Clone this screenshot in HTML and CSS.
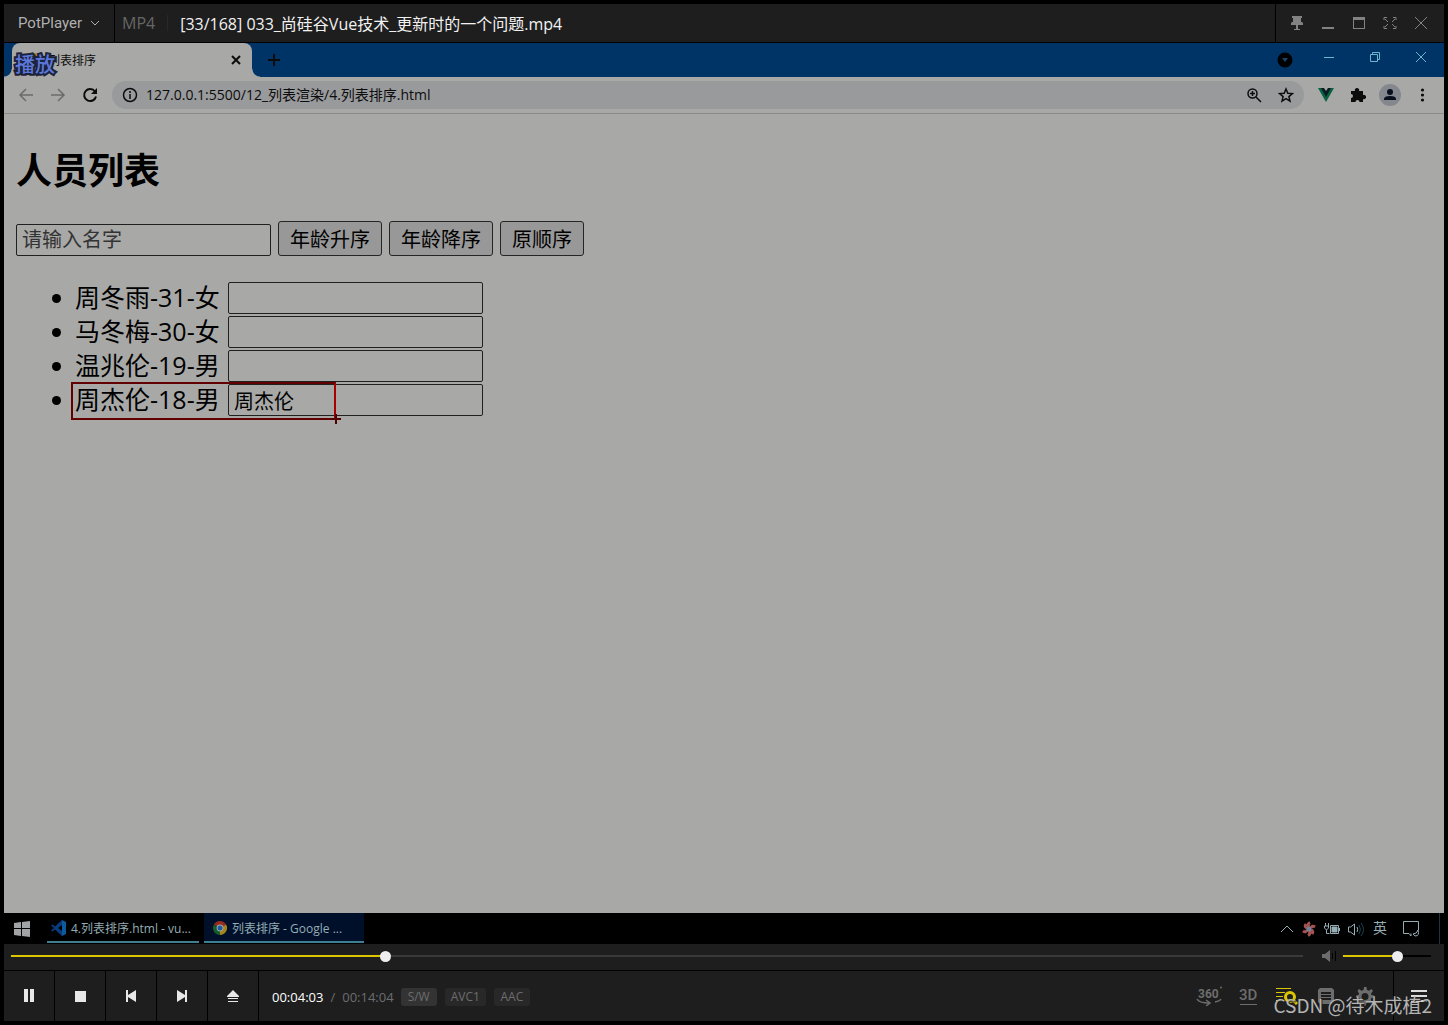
FILE: index.html
```html
<!DOCTYPE html>
<html lang="zh-CN">
<head>
<meta charset="utf-8">
<title>PotPlayer</title>
<link rel="stylesheet" href="styles.css">
</head>
<body>
<div class="player">
  <header class="titlebar">
    <button class="brand">PotPlayer
      <svg width="10" height="6" viewBox="0 0 10 6" class="line"><path d="M1 1l4 4 4-4"/></svg>
    </button>
    <span class="format">MP4</span>
    <h1 class="file-name">[33/168] 033_尚硅谷Vue技术_更新时的一个问题.mp4</h1>
    <div class="window-buttons">
      <button aria-label="置顶"><svg width="14" height="16" viewBox="0 0 14 16"><path fill="currentColor" d="M2 1h10v2h-1v4h1l1 1v2H8v4h2v1H4v-1h2v-4H1V8l1-1h1V3H2z"/></svg></button>
      <button aria-label="最小化"><svg width="14" height="16" viewBox="0 0 14 16"><path fill="currentColor" d="M1 12h12v2H1z"/></svg></button>
      <button aria-label="最大化"><svg width="14" height="16" viewBox="0 0 14 16"><path fill="currentColor" fill-rule="evenodd" d="M1 2h12v12H1zM2 5v8h10V5z"/></svg></button>
      <button aria-label="全屏"><svg width="14" height="16" viewBox="0 0 14 16" class="line"><path d="M1 5V2.500h3M10 2.500h3V5M13 11v2.500h-3M4 13.500H1V11M2 4l3 3M12 4L9 7M2 12l3-3M12 12L9 9"/></svg></button>
      <button aria-label="关闭"><svg width="14" height="16" viewBox="0 0 14 16" class="line"><path d="M1 2l12 12M13 2L1 14"/></svg></button>
    </div>
  </header>

  <main class="video">
    <div class="tab-strip">
      <div class="tab">
        <svg width="16" height="16" viewBox="0 0 16 16"><path fill="#a56a06" d="M3 5l2-4 3 1 3-1 3 4-2 4H5z"/><path fill="#241b08" d="M5 5h7l-1 7H6z"/></svg>
        <span class="tab-title">列表排序</span>
        <button aria-label="关闭标签页"><svg width="12" height="12" viewBox="0 0 12 12" class="bold"><path d="M2 2l8 8M10 2l-8 8"/></svg></button>
      </div>
      <button class="new-tab" aria-label="新标签页"><svg width="14" height="14" viewBox="0 0 14 14" class="bold"><path d="M7 1v12M1 7h12"/></svg></button>
      <button class="tab-search" aria-label="搜索标签页"><svg width="16" height="16" viewBox="0 0 16 16"><circle cx="8" cy="8" r="7.500"/><path fill="#17456b" d="M5 6h6l-3 4z"/></svg></button>
      <div class="browser-buttons">
        <button aria-label="最小化"><svg width="12" height="12" viewBox="0 0 12 12" class="line"><path d="M1 6.500h10"/></svg></button>
        <button aria-label="还原"><svg width="12" height="12" viewBox="0 0 12 12" class="line"><path d="M1.500 3.500h7v7h-7zM3.500 3V1.500h7v7H9"/></svg></button>
        <button aria-label="关闭"><svg width="12" height="12" viewBox="0 0 12 12" class="line"><path d="M1 1l10 10M11 1L1 11"/></svg></button>
      </div>
      <span class="osd">播放</span>
    </div>

    <div class="toolbar">
      <button class="dim" aria-label="后退"><svg width="16" height="16" viewBox="0 0 16 16" class="mid"><path d="M15 8H2M8 2L2 8l6 6"/></svg></button>
      <button class="dim" aria-label="前进"><svg width="16" height="16" viewBox="0 0 16 16" class="mid"><path d="M1 8h13M8 2l6 6-6 6"/></svg></button>
      <button aria-label="刷新"><svg width="16" height="16" viewBox="0 0 16 16" class="bold"><path d="M13 4.500A6 6 0 1 0 14 9.500"/><path fill="currentColor" stroke="none" d="M15 1v6H9z"/></svg></button>
      <div class="omnibox">
        <svg width="16" height="16" viewBox="0 0 16 16" class="mid"><circle cx="8" cy="8" r="6.500"/><path d="M8 7v5M8 4v2"/></svg>
        <input class="url" aria-label="地址" value="127.0.0.1:5500/12_列表渲染/4.列表排序.html">
        <button aria-label="缩放"><svg width="16" height="16" viewBox="0 0 16 16" class="mid"><circle cx="6.500" cy="6.500" r="4.500"/><path d="M10 10l5 5M4 6.500h5M6.500 4v5"/></svg></button>
        <button aria-label="收藏"><svg width="16" height="16" viewBox="0 0 16 16" class="mid"><path d="M8 2l1.800 4.200 4.600.4-3.500 3 1.100 4.500L8 11.700l-4 2.400 1.100-4.500-3.500-3 4.600-.4z"/></svg></button>
      </div>
      <button aria-label="Vue"><svg width="16" height="16" viewBox="0 0 16 16"><path fill="#08633f" d="M0 1h4l4 7 4-7h4L8 15z"/><path fill="#0d1c24" d="M3 1h3l2 3 2-3h3L8 10z"/></svg></button>
      <button aria-label="扩展程序"><svg width="16" height="16" viewBox="0 0 16 16"><path fill="currentColor" d="M1 4h4a2.200 2.200 0 1 1 4 0h4v4a2.200 2.200 0 1 1 0 4v3H9.500a2 2 0 1 0-4 0H1v-4a2 2 0 1 0 0-4z"/></svg></button>
      <button aria-label="用户"><svg width="22" height="22" viewBox="0 0 22 22"><circle cx="11" cy="11" r="11" fill="#84878d"/><circle cx="11" cy="8" r="3" fill="#0a0f1e"/><path fill="#0a0f1e" d="M5 16v-1q0-3 6-3t6 3v1z"/></svg></button>
      <button aria-label="菜单"><svg width="16" height="16" viewBox="0 0 16 16"><g fill="currentColor"><circle cx="8.500" cy="3" r="1.600"/><circle cx="8.500" cy="8" r="1.600"/><circle cx="8.500" cy="13" r="1.600"/></g></svg></button>
    </div>

    <section class="page">
      <h2>人员列表</h2>
      <div class="filters">
        <input type="text" placeholder="请输入名字" aria-label="请输入名字">
        <button>年龄升序</button>
        <button>年龄降序</button>
        <button>原顺序</button>
      </div>
      <ul class="people">
        <li><label for="p1">周冬雨-31-女</label><input id="p1" type="text"></li>
        <li><label for="p2">马冬梅-30-女</label><input id="p2" type="text"></li>
        <li><label for="p3">温兆伦-19-男</label><input id="p3" type="text"></li>
        <li><label for="p4">周杰伦-18-男</label><input id="p4" type="text" value="周杰伦"><span class="marker"></span></li>
      </ul>
    </section>

    <div class="taskbar">
      <button class="start" aria-label="开始"><svg width="16" height="16" viewBox="0 0 16 16"><path fill="#a0a4a7" d="M0 2l7-1v6H0zM8 1l8-1v7H8zM0 8h7v7l-7-1zM8 8h8v8l-8-1z"/></svg></button>
      <button class="task task-code">
        <svg width="16" height="16" viewBox="0 0 16 16"><path fill="#093c7d" d="M11 0L4 6.500 1.500 4.500 0 5.500 3 8l-3 2.500 1.500 1L4 9.500 11 16zM11 5v6L7 8z"/><path fill="#0d59a0" d="M11 0l4 2v12l-4 2z"/></svg>
        <span>4.列表排序.html - vu...</span>
      </button>
      <button class="task task-browser">
        <svg width="16" height="16" viewBox="0 0 16 16"><path fill="#982b20" d="M8 8L1.900 4.500a7 7 0 0 1 12.200 0z"/><path fill="#a5841a" d="M8 8l6.100-3.500A7 7 0 0 1 8 15z"/><path fill="#155b2b" d="M8 8v7A7 7 0 0 1 1.900 4.500z"/><circle cx="8" cy="8" r="3.400" fill="#a5a9aa"/><circle cx="8" cy="8" r="2.500" fill="#205aa5"/></svg>
        <span>列表排序 - Google ...</span>
      </button>
      <div class="tray">
        <svg width="14" height="16" viewBox="0 0 14 16" class="line"><path d="M1 11l6-6 6 6"/></svg>
        <svg width="14" height="16" viewBox="0 0 14 16"><g fill="none" stroke="#a5544f" stroke-width="3"><path d="M7 6q-2-3 1-4.500M9 7q1-3 4-1M9 9q3 1 1 4M7 10q2 3-1 4.500M5 9q-1 3-4 1M5 7Q2 6 4 3"/></g><circle cx="7" cy="8" r="2.600" fill="#76809a"/></svg>
        <svg width="16" height="16" viewBox="1 0 16 16" class="line"><path d="M2.500 2v3M5.500 2v3M1.500 5v2l2 2 2-2V5zM3.500 9v3.500h3"/><path d="M7.500 4.500h8v8h-8zM16.500 7v3"/><path fill="currentColor" d="M9 6h5v5H9z"/></svg>
        <svg width="16" height="16" viewBox="1 0 16 16" class="line"><path d="M1.500 6v5h2l4 3V3l-4 3zM10 6q1.500 2.500 0 5"/><path stroke="#164450" d="M12 4q3 4.500 0 9M14 2q5 6.500 0 13"/></svg>
        <span class="ime">英</span>
        <svg width="18" height="18" viewBox="0 0 18 18" class="line"><path d="M7 13.500H1.500v-12h15V10M7 13.500l2 2.500v-2.500M11 14q4 0 5-4 2 6-3 6z"/></svg>
        <span class="show-desktop"></span>
      </div>
    </div>
  </main>

  <div class="seek-row">
    <input class="seek" type="range" min="0" max="844" value="243" aria-label="播放进度">
    <svg width="16" height="14" viewBox="0 0 16 14"><path fill="#6d6d6d" d="M1 5h3l5-4v12L4 9H1z"/><path class="line" stroke="#6d6d6d" d="M11.500 4v6M14.500 2v10"/></svg>
    <input class="volume" type="range" min="0" max="100" value="63" aria-label="音量">
  </div>

  <footer class="controls">
    <button aria-label="暂停"><svg width="16" height="16" viewBox="0 0 16 16"><path fill="currentColor" d="M3 1h4v13H3zM9 1h4v13H9z"/></svg></button>
    <button aria-label="停止"><svg width="16" height="16" viewBox="0 0 16 16"><path fill="currentColor" d="M3 3h11v11H3z"/></svg></button>
    <button aria-label="上一个"><svg width="16" height="16" viewBox="0 0 16 16"><path fill="currentColor" d="M3 2h2v5l8-5v12L5 9v5H3z"/></svg></button>
    <button aria-label="下一个"><svg width="16" height="16" viewBox="0 0 16 16"><path fill="currentColor" d="M13 2h-2v5L3 2v12l8-5v5h2z"/></svg></button>
    <button aria-label="打开"><svg width="16" height="16" viewBox="0 0 16 16"><path fill="currentColor" d="M8 2l6 6v1H2V8zM3 10h10v1H3zM3 13h10v1H3z"/></svg></button>
    <div class="time"><span class="now">00:04:03</span><span>/</span><span>00:14:04</span></div>
    <div class="badges"><span class="on">S/W</span><span>AVC1</span><span>AAC</span></div>
    <div class="extras">
      <button aria-label="360 度"><svg width="26" height="20" viewBox="0 0 26 20"><text x="2" y="12" class="glyph">360</text><circle cx="25" cy="1.500" r="1" fill="currentColor"/><path class="arc" d="M1 13q2 4 12 4M25 13q-1 2-6 3M10 14l4 3-4 3"/></svg></button>
      <button aria-label="3D"><svg width="18" height="20" viewBox="0 0 18 20"><text x="0" y="14" class="glyph large">3D</text><path class="line" d="M1 18.500h17"/></svg></button>
      <button class="active" aria-label="搜索字幕"><svg width="22" height="20" viewBox="0 0 22 20"><path class="line" d="M0 2.500h15M0 6.500h9M0 10.500h7M0 14.500h8"/><circle class="thick" cx="14" cy="11" r="4.500"/><path class="thick" d="M17 14l4 4"/></svg></button>
      <button aria-label="播放列表"><svg width="18" height="20" viewBox="0 0 18 20"><path fill="currentColor" fill-rule="evenodd" d="M3 2h12l2 2v12l-2 2H3l-2-2V4zM4 6v2h10V6zM4 9v2h10V9zM4 12v2h10v-2z"/></svg></button>
      <button aria-label="设置"><svg width="20" height="20" viewBox="0 0 20 20"><path fill="currentColor" fill-rule="evenodd" d="M9 1h2.500l.5 3 2 .8L16.500 3 18 5l-2 2.500.5 1.500 2.500.5v2l-2.500.5-.8 2L17.500 16 16 17.500 13.500 16l-2 .8-.5 2.700H9l-.5-2.700-2-.8L4 17.500 2.500 16l1.700-2.500-.7-1.500L1 11.500v-2L3.500 9 4 7.500 2.500 5 4 3l2.500 1.800L8.500 4zM10 7a3.500 3.500 0 1 0 0 7 3.500 3.500 0 0 0 0-7z"/></svg></button>
      <button class="menu" aria-label="菜单"><svg width="16" height="14" viewBox="0 0 16 14"><path fill="currentColor" d="M0 1h16v2H0zM0 6h16v2H0zM0 11h16v2H0z"/></svg></button>
    </div>
  </footer>
  <span class="watermark">CSDN @待木成植2</span>
</div>
</body>
</html>
```
FILE: styles.css
```css
* { box-sizing: border-box; }

body {
  margin: 0;
  background: #000;
  font-family: "Open Sans", "Noto Sans CJK SC", sans-serif;
}

button {
  display: flex;
  align-items: center;
  justify-content: center;
  flex: none;
  margin: 0;
  padding: 0;
  border: 0;
  background: none;
  color: inherit;
  font: inherit;
}

input { margin: 0; font: inherit; color: inherit; }

svg { display: block; flex: none; }

.line { fill: none; stroke: currentColor; stroke-width: 1; }
.mid { fill: none; stroke: currentColor; stroke-width: 1.500; }
.arc { fill: none; stroke: currentColor; stroke-width: 1.500; }
.bold { fill: none; stroke: currentColor; stroke-width: 2; }
.thick { fill: none; stroke: currentColor; stroke-width: 3; }

.player {
  position: relative;
  display: flex;
  flex-direction: column;
  min-height: 100vh;
  padding: 4px;
}

/* Player title bar */
.titlebar {
  display: flex;
  align-items: stretch;
  height: 38px;
  margin-bottom: 1px;
  background: #1e1e1e;
  color: #828282;
}

.brand {
  gap: 8px;
  width: 111px;
  border-right: 1px solid #000;
  color: #b0b0b0;
  font: 400 15px/20px Roboto, sans-serif;
}

.format {
  align-self: center;
  margin-left: 7px;
  padding-right: 12px;
  border-right: 1px solid #292929;
  color: #666;
  font-size: 16px;
  line-height: 16px;
}

.file-name {
  flex: 1;
  min-width: 0;
  margin: 0 0 0 12px;
  overflow: hidden;
  color: #f2f2f2;
  font-size: 16px;
  font-weight: 400;
  line-height: 40px;
  white-space: nowrap;
}

.window-buttons {
  display: flex;
  padding: 0 8px 0 5px;
  border-left: 1px solid #000;
}

.window-buttons button { width: 31px; }

/* Browser frame */
.video {
  display: flex;
  flex: 1;
  flex-direction: column;
  background: #a8a8a7;
  color: #0c0c0c;
}

.tab-strip {
  position: relative;
  display: flex;
  height: 34px;
  background: #003467;
}

.tab {
  position: relative;
  display: flex;
  align-items: center;
  width: 240px;
  margin-left: 8px;
  padding: 0 10px 0 12px;
  border-radius: 8px 8px 0 0;
  background: #a8a8a7;
}

/* Flared feet of the active tab */
.tab::before,
.tab::after {
  position: absolute;
  bottom: 0;
  width: 8px;
  height: 8px;
  content: "";
}

.tab::before {
  right: 100%;
  background: radial-gradient(circle at 0 0, #003467 7px, #a8a8a7 8px);
}

.tab::after {
  left: 100%;
  background: radial-gradient(circle at 100% 0, #003467 7px, #a8a8a7 8px);
}

.tab-title {
  flex: 1;
  margin-left: 8px;
  font-size: 12px;
}

.new-tab { width: 44px; }
.tab-search { width: 28px; margin-left: auto; }

.browser-buttons {
  display: flex;
  height: 28px;
  margin-left: 7px;
  color: #6bb6d0;
}

.browser-buttons button { width: 46px; }

.osd {
  position: absolute;
  top: 8px;
  left: 11px;
  color: #5c78dc;
  font-size: 20px;
  font-weight: 500;
  line-height: 28px;
  paint-order: stroke;
  -webkit-text-stroke: 4px #1c2238;
}

.toolbar {
  display: flex;
  align-items: center;
  height: 37px;
  padding: 0 6px;
  border-bottom: 1px solid #8b8b8b;
}

.toolbar button { width: 32px; height: 28px; }
.toolbar .dim { color: #6b6b6b; }

.omnibox {
  display: flex;
  flex: 1;
  align-items: center;
  height: 28px;
  margin: 0 6px;
  padding: 0 2px 0 10px;
  border-radius: 14px;
  background: #999a9c;
}

.url {
  flex: 1;
  min-width: 0;
  margin-left: 8px;
  padding: 0 0 2px;
  border: 0;
  outline: 0;
  background: none;
  font-size: 14px;
}

/* Web page in the browser */
.page {
  flex: 1;
  padding: 33px 12px;
  color: #000;
}

.page h2 {
  margin: 0;
  font-size: 36px;
  line-height: 48px;
}

.filters {
  display: flex;
  align-items: flex-end;
  gap: 7px;
  margin-top: 26px;
}

.page input {
  width: 255px;
  height: 32px;
  padding: 0 5px;
  border: 1px solid #202020;
  border-radius: 2px;
  background: none;
  font-size: 20px;
}

.page .filters input { padding-bottom: 2px; }

.page input::placeholder { color: #333; }

.filters button {
  height: 35px;
  padding: 0 11px;
  border: 1px solid #252525;
  border-radius: 3px;
  background: #989898;
  font-size: 20px;
}

.people {
  margin: 25px 0 0;
  padding: 0;
  list-style: none;
}

.people li {
  position: relative;
  display: flex;
  align-items: center;
  height: 34px;
  padding-left: 36px;
}

.people li::before {
  width: 9px;
  height: 9px;
  margin-right: 14px;
  border-radius: 50%;
  background: #000;
  content: "";
}

.people label {
  width: 145px;
  margin-right: 8px;
  padding-bottom: 2px;
  font-size: 25px;
  line-height: 32px;
  white-space: nowrap;
}

.marker {
  position: absolute;
  top: -1px;
  left: 55px;
  width: 265px;
  height: 38px;
  border: 2px solid #620000;
  border-right-color: #a80000;
}

.marker::after {
  position: absolute;
  right: -7px;
  bottom: -6px;
  width: 10px;
  height: 10px;
  background: linear-gradient(#500000, #500000) center / 2px 100% no-repeat, linear-gradient(#500000, #500000) center / 100% 2px no-repeat;
  content: "";
}

/* Desktop taskbar */
.taskbar {
  display: flex;
  height: 31px;
  background: #000;
  color: #94adb3;
}

.start { width: 36px; margin-right: 7px; }

.task {
  justify-content: flex-start;
  gap: 4px;
  height: 30px;
  margin-right: 5px;
  padding: 2px 4px 0;
  border-bottom: 2px solid #3e8091;
  font-size: 12px;
  white-space: nowrap;
}

.task-code { width: 152px; }
.task-browser { width: 160px; padding-left: 8px; background: #00102b; }

.tray {
  display: flex;
  align-items: center;
  gap: 8px;
  margin-left: auto;
}

.ime {
  margin: 0 7px 0 1px;
  font-size: 14px;
  line-height: 16px;
  padding-bottom: 2px;
}

.show-desktop {
  align-self: stretch;
  width: 5px;
  margin-left: 11px;
  border-left: 1px solid #1f3439;
}

/* Progress and volume */
.seek-row {
  display: flex;
  align-items: center;
  height: 26px;
  padding: 0 13px 2px 7px;
  background: #1e1e1e;
}

.seek-row input {
  height: 12px;
  -webkit-appearance: none;
  appearance: none;
}

.seek-row input::-webkit-slider-thumb {
  width: 11px;
  height: 11px;
  border-radius: 50%;
  background: #eee;
  -webkit-appearance: none;
}

.seek {
  flex: 1;
  min-width: 0;
  margin-right: 18px;
  background: linear-gradient(#dcc600, #dcc600) left / 29% 2px no-repeat, linear-gradient(#3a3a3a, #3a3a3a) center / 100% 2px no-repeat;
}

.volume {
  width: 88px;
  margin-left: 6px;
  background: linear-gradient(#dcc600, #dcc600) left / 62% 2px no-repeat, linear-gradient(#000, #000) center / 100% 2px no-repeat;
}

/* Control bar */
.controls {
  display: flex;
  align-items: center;
  height: 50px;
  margin-top: 1px;
  background: #1e1e1e;
  color: #6d6d6d;
  font-size: 12px;
}

.controls > button {
  width: 51px;
  height: 50px;
  border-right: 1px solid #000;
  color: #e8e8e8;
}

.time {
  display: flex;
  gap: 7px;
  margin-left: 13px;
  padding-top: 2px;
  font-size: 13px;
}

.now { color: #fff; }

.badges {
  display: flex;
  gap: 8px;
  margin-left: 7px;
  padding-top: 2px;
}

.badges span {
  min-width: 36px;
  padding: 0 6px;
  border-radius: 3px;
  background: #282828;
  line-height: 18px;
  text-align: center;
}

.badges .on { background: #333; }

.extras {
  display: flex;
  align-items: center;
  margin-left: auto;
}

.extras button { width: 39px; height: 50px; }
.extras .active { color: #dcc600; }
.extras .menu { width: 51px; margin-left: 9px; border-left: 1px solid #000; color: #ddd; }

.glyph { fill: currentColor; font: 700 12px Roboto, sans-serif; }
.glyph.large { font-size: 15px; font-weight: 500; }

.watermark {
  position: absolute;
  right: 16px;
  bottom: 6px;
  color: #b4b4b4;
  font: 19px/28px "Noto Sans CJK SC", sans-serif;
  text-shadow: 1px 1px 1px #222;
}
```
